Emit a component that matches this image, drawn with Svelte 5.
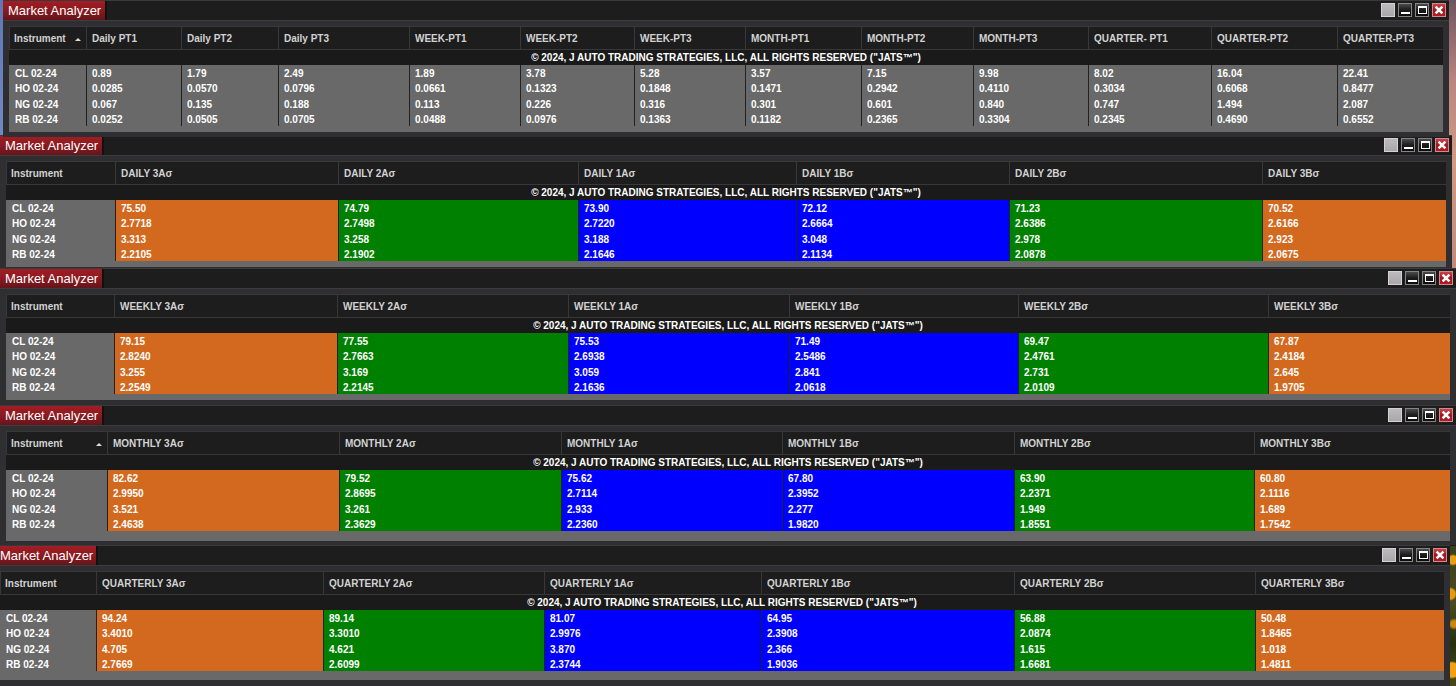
<script>
  const symbols = ['CL 02-24', 'HO 02-24', 'NG 02-24', 'RB 02-24'];
  const bands = ['3Aσ', '2Aσ', '1Aσ', '1Bσ', '2Bσ', '3Bσ'];
  const tones = ['orange', 'green', 'blue', 'blue', 'green', 'orange'];
  const notice = '© 2024, J AUTO TRADING STRATEGIES, LLC, ALL RIGHTS RESERVED ("JATS™")';

  const banded = (name) => bands.map((b) => `${name} ${b}`);

  const windows = [
    {
      id: 'targets',
      sorted: true,
      heads: ['Daily PT1', 'Daily PT2', 'Daily PT3', 'WEEK-PT1', 'WEEK-PT2', 'WEEK-PT3', 'MONTH-PT1', 'MONTH-PT2', 'MONTH-PT3', 'QUARTER- PT1', 'QUARTER-PT2', 'QUARTER-PT3'],
      tones: [],
      weights: [77, 95, 97, 131, 111, 114, 111, 116, 112, 115, 123, 126, 106],
      rows: [
        ['0.89', '1.79', '2.49', '1.89', '3.78', '5.28', '3.57', '7.15', '9.98', '8.02', '16.04', '22.41'],
        ['0.0285', '0.0570', '0.0796', '0.0661', '0.1323', '0.1848', '0.1471', '0.2942', '0.4110', '0.3034', '0.6068', '0.8477'],
        ['0.067', '0.135', '0.188', '0.113', '0.226', '0.316', '0.301', '0.601', '0.840', '0.747', '1.494', '2.087'],
        ['0.0252', '0.0505', '0.0705', '0.0488', '0.0976', '0.1363', '0.1182', '0.2365', '0.3304', '0.2345', '0.4690', '0.6552']
      ]
    },
    {
      id: 'daily',
      sorted: false,
      heads: banded('DAILY'),
      tones,
      weights: [109, 223, 240, 218, 213, 253, 184],
      rows: [
        ['75.50', '74.79', '73.90', '72.12', '71.23', '70.52'],
        ['2.7718', '2.7498', '2.7220', '2.6664', '2.6386', '2.6166'],
        ['3.313', '3.258', '3.188', '3.048', '2.978', '2.923'],
        ['2.2105', '2.1902', '2.1646', '2.1134', '2.0878', '2.0675']
      ]
    },
    {
      id: 'weekly',
      sorted: false,
      heads: banded('WEEKLY'),
      tones,
      weights: [108, 223, 231, 221, 229, 250, 182],
      rows: [
        ['79.15', '77.55', '75.53', '71.49', '69.47', '67.87'],
        ['2.8240', '2.7663', '2.6938', '2.5486', '2.4761', '2.4184'],
        ['3.255', '3.169', '3.059', '2.841', '2.731', '2.645'],
        ['2.2549', '2.2145', '2.1636', '2.0618', '2.0109', '1.9705']
      ]
    },
    {
      id: 'monthly',
      sorted: true,
      heads: banded('MONTHLY'),
      tones,
      weights: [101, 232, 222, 221, 232, 240, 196],
      rows: [
        ['82.62', '79.52', '75.62', '67.80', '63.90', '60.80'],
        ['2.9950', '2.8695', '2.7114', '2.3952', '2.2371', '2.1116'],
        ['3.521', '3.261', '2.933', '2.277', '1.949', '1.689'],
        ['2.4638', '2.3629', '2.2360', '1.9820', '1.8551', '1.7542']
      ]
    },
    {
      id: 'quarterly',
      sorted: false,
      heads: banded('QUARTERLY'),
      tones,
      weights: [96, 227, 221, 217, 253, 241, 189],
      rows: [
        ['94.24', '89.14', '81.07', '64.95', '56.88', '50.48'],
        ['3.4010', '3.3010', '2.9976', '2.3908', '2.0874', '1.8465'],
        ['4.705', '4.621', '3.870', '2.366', '1.615', '1.018'],
        ['2.7669', '2.6099', '2.3744', '1.9036', '1.6681', '1.4811']
      ]
    }
  ];

  const share = (weights, i) => (100 * weights[i]) / weights.reduce((a, b) => a + b, 0);
</script>

<main class="desktop">
  {#each windows as w (w.id)}
    <section class="window {w.id}">
      <header class="titlebar">
        <h2 class="tab">Market Analyzer</h2>
        <div class="controls">
          <button class="ctl blank" aria-label="Link"></button>
          <button class="ctl" aria-label="Minimize">
            <svg viewBox="0 0 14 14"><path d="M3 9h9v2H3z" fill="#fff" /></svg>
          </button>
          <button class="ctl" aria-label="Maximize">
            <svg viewBox="0 0 14 14"><path d="M3 3h9v8H3zM4 5v5h7V5z" fill="#fff" fill-rule="evenodd" /></svg>
          </button>
          <button class="ctl close" aria-label="Close">
            <svg viewBox="0 0 14 14"><path d="M3.6 3.6l6.8 6.8M10.4 3.6l-6.8 6.8" stroke="#fff" stroke-width="2.6" /></svg>
          </button>
        </div>
      </header>
      <div class="grid">
        <table>
          <colgroup>
            {#each w.weights as _, i}
              <col style="width: {share(w.weights, i)}%" />
            {/each}
          </colgroup>
          <thead>
            <tr>
              <th scope="col" class="lead">
                <span class="first">
                  Instrument
                  {#if w.sorted}
                    <svg class="sort" viewBox="0 0 6 3"><path d="M0 3L3 0L6 3z" fill="#ddd" /></svg>
                  {/if}
                </span>
              </th>
              {#each w.heads as h}
                <th scope="col">{h}</th>
              {/each}
            </tr>
          </thead>
          <tbody class="notice">
            <tr><td colspan={w.heads.length + 1}>{notice}</td></tr>
          </tbody>
          <tbody class="data">
            {#each w.rows as row, r}
              <tr>
                <th scope="row">{symbols[r]}</th>
                {#each row as v, c}
                  <td class={w.tones[c] ?? 'plain'}>{v}</td>
                {/each}
              </tr>
            {/each}
          </tbody>
        </table>
      </div>
    </section>
  {/each}
</main>

<style>
  :global(body) {
    background: #2f2f31;
  }

  .desktop {
    display: flex;
    flex-direction: column;
    overflow: hidden;
    font-family: 'Liberation Sans', Arial, sans-serif;
    background:
      linear-gradient(#5f78b4, #7088c4) left top / 3px 135px no-repeat,
      linear-gradient(#6f5560, #b98580 30%, #d09a85 60%, #c08a80) right top / 8px 268px no-repeat,
      radial-gradient(circle at 5px 14px, #e8a012 0 4px, transparent 6px) right bottom 110px / 8px 30px no-repeat,
      radial-gradient(circle at 2px 12px, #e59a10 0 5px, transparent 7px) right bottom 78px / 8px 26px no-repeat,
      radial-gradient(circle at 6px 10px, #c98a14 0 3px, transparent 6px) right bottom 52px / 8px 20px no-repeat,
      radial-gradient(circle at 4px 14px, #f0a010 0 7px, transparent 9px) right bottom / 8px 30px no-repeat,
      linear-gradient(#3a3f1c, #4c4a20 40%, #26300f 70%, #4a4a18) right bottom / 8px 140px no-repeat,
      #1b1b1c;
  }

  .window {
    box-sizing: border-box;
    padding: 0 6px 5px;
    border-top: 1px solid #3a3a3d;
    background: #2f2f32;
  }

  .titlebar {
    display: flex;
    justify-content: space-between;
    height: 19px;
    margin: 0 -6px 5px;
    border-bottom: 1px solid #3d3d40;
    background: #1d1d1d;
  }

  .tab {
    margin: 0;
    padding: 2px 4px 0 5px;
    border-right: 2px solid #111;
    background: linear-gradient(#a31d24, #8a1a20 50%, #64151b);
    color: #fff;
    font-size: 13px;
    font-weight: 400;
    line-height: 16px;
    white-space: nowrap;
  }

  .controls {
    display: flex;
    gap: 3px;
    padding: 2px 3px 0 0;
  }

  .ctl {
    box-sizing: border-box;
    width: 14px;
    height: 14px;
    padding: 0;
    border: 1px solid #858585;
    background: linear-gradient(#4a4a4a, #1c1c1c 50%, #0c0c0c);
  }

  .ctl svg {
    display: block;
    width: 14px;
    height: 14px;
    margin: -1px;
  }

  .blank {
    border-color: #d4d2d4;
    background: linear-gradient(#bdbabd, #aaa6a9);
  }

  .close {
    border-color: #d08a8e;
    background: linear-gradient(#c8434a, #a8131b 50%, #b01a22);
  }

  .grid {
    padding-bottom: 6px;
    background: #696969;
  }

  table {
    width: 100%;
    table-layout: fixed;
    border-collapse: separate;
    border-spacing: 0;
    font-size: 10px;
    font-weight: 700;
    color: #fff;
  }

  th,
  td {
    box-sizing: border-box;
    padding: 2px 0 0 5px;
    text-align: left;
    white-space: nowrap;
  }

  thead th {
    height: 24px;
    border: solid #38383b;
    border-width: 1px 0 1px 1px;
    background: #1d1d1d;
    color: #d2d2d2;
    line-height: 20px;
  }

  thead .lead {
    padding-left: 4px;
  }

  .first {
    display: flex;
    align-items: center;
    justify-content: space-between;
    padding-right: 5px;
  }

  .sort {
    width: 6px;
    height: 3px;
  }

  .notice td {
    height: 15px;
    padding: 0;
    background: #1a1a1a;
    line-height: 15px;
    text-align: center;
  }

  .data th,
  .data td {
    height: 15px;
    border-left: 1px solid #222;
    line-height: 13px;
  }

  .data tr:nth-child(2) > * {
    height: 16px;
    line-height: 14px;
  }

  .data th {
    border-left-color: #696969;
    background: #696969;
  }

  .plain {
    background: #696969;
  }

  .orange {
    background: #d2691e;
  }

  .green {
    background: #008000;
  }

  .blue {
    background: #0000ff;
  }

  .targets {
    position: relative;
    z-index: 1;
    margin: 0 7px 0 3px;
  }

  .daily {
    margin: -2px 4px 0 0;
    padding-bottom: 1px;
  }

  .monthly {
    padding-bottom: 4px;
  }

  .monthly .grid {
    padding-bottom: 10px;
  }

  .quarterly {
    margin: 0 6px 0 -6px;
    padding-bottom: 6px;
  }

  .quarterly .tab {
    padding-left: 6px;
    padding-right: 3px;
  }

  .quarterly .grid {
    padding-bottom: 9px;
  }
</style>
